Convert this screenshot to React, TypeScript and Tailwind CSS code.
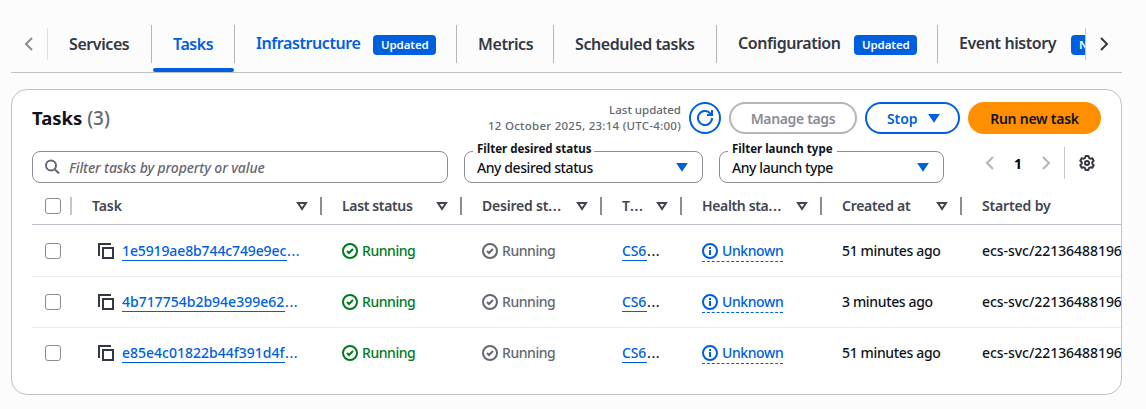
import React from "react";

type IconProps = { className?: string };

const Chevron = ({ dir, className = "" }: IconProps & { dir: "left" | "right" }) => (
  <svg viewBox="0 0 16 16" className={`size-4 shrink-0 ${className}`} fill="none" stroke="currentColor" strokeWidth="2">
    <path d={dir === "left" ? "M11 2 5 8l6 6" : "M5 2l6 6-6 6"} />
  </svg>
);

const Caret = ({ className = "" }: IconProps) => (
  <svg viewBox="0 0 16 16" className={`size-4 shrink-0 ${className}`} fill="currentColor" stroke="currentColor" strokeWidth="2">
    <path d="M4 5h8l-4 6z" />
  </svg>
);

const SortCaret = () => (
  <svg viewBox="0 0 16 16" className="size-4 shrink-0" fill="none" stroke="currentColor" strokeWidth="2">
    <path d="M4 5h8l-4 6z" />
  </svg>
);

const Refresh = () => (
  <svg viewBox="0 0 16 16" className="size-4" fill="none" stroke="currentColor" strokeWidth="2">
    <path d="M15 8a7 7 0 1 1-1.8-4.7L15 5" />
    <path d="M10 5h5V0" />
  </svg>
);

const Search = () => (
  <svg viewBox="0 0 16 16" className="size-4 shrink-0 text-[#656871]" fill="none" stroke="currentColor" strokeWidth="2">
    <circle cx="7" cy="6.5" r="5" />
    <path d="m10.5 10 4.500 4.500" />
  </svg>
);

const Gear = () => (
  <svg viewBox="0 0 16 16" className="size-4 shrink-0 text-[#333843]" fill="none" stroke="currentColor" strokeWidth="2" strokeLinejoin="round">
    <path d="M6.600 1h2.800l.6 2 1.300.75 2-.5 1.400 2.500L13.300 7.200v1.600l1.400 1.450-1.400 2.500-2-.5L10 13l-.6 2H6.600L6 13l-1.300-.75-2 .5-1.400-2.500L2.700 8.800V7.200L1.300 5.750l1.400-2.500 2 .5L6 3z" />
    <circle cx="8" cy="8" r="2" />
  </svg>
);

const Copy = () => (
  <svg viewBox="0 0 16 16" className="size-4 shrink-0 text-[#333843]" fill="none" stroke="currentColor" strokeWidth="2">
    <path d="M5 5h10v10H5z" />
    <path d="M1 13V1h12" />
  </svg>
);

const Check = () => (
  <svg viewBox="0 0 16 16" className="size-4 shrink-0" fill="none" stroke="currentColor" strokeWidth="2">
    <circle cx="8" cy="8" r="7" />
    <path d="m5 8 2 2 4-4" />
  </svg>
);

const Info = () => (
  <svg viewBox="0 0 16 16" className="size-4 shrink-0" fill="none" stroke="currentColor" strokeWidth="2">
    <circle cx="8" cy="8" r="7" />
    <path d="M8 7v5M8 4v2" />
  </svg>
);

const Badge = ({ children, className }: { children: string; className: string }) => (
  <span className={`h-5 w-[63px] shrink-0 rounded bg-[#005fde] pl-2 text-[11.5px] font-semibold leading-[20px] tracking-[-0.1px] text-white ${className}`}>
    {children}
  </span>
);

const tabs = [
  { label: "Services", width: "w-[104px]", box: "w-auto", color: "text-[#333843]", badge: "" },
  { label: "Tasks", width: "w-[83px]", box: "w-auto", color: "text-[#005fde]", badge: "" },
  { label: "Infrastructure", width: "w-[222px]", box: "w-[117px] -mt-0.5", color: "text-[#005fde]", badge: "Updated" },
  { label: "Metrics", width: "w-[97px]", box: "w-auto", color: "text-[#333843]", badge: "" },
  { label: "Scheduled tasks", width: "w-[163px]", box: "w-auto", color: "text-[#333843]", badge: "" },
  { label: "Configuration", width: "w-[221px]", box: "w-[116px] -mt-0.5", color: "text-[#333843]", badge: "Updated" },
  { label: "Event history", width: "w-[240px]", box: "w-[112px] -mt-0.5", color: "text-[#333843]", badge: "New" },
];

const Tabs = () => (
  <nav className="ml-[11px] mt-4 flex h-[57px] w-[1111px] border-b border-[#c0c0c8]">
    <div className="mt-3 flex h-8 w-[37px] shrink-0 items-center justify-center border-r border-[#dedee3] text-[#8c8c94]">
      <Chevron dir="left" />
    </div>
    <div className="flex w-[1037px] shrink-0 overflow-hidden">
      {tabs.map((t) => (
        <div key={t.label} className={`flex shrink-0 flex-col justify-between pt-[9px] ${t.width}`}>
          <div className="flex h-[38px] items-center border-r border-[#b4b4bb] pl-[21px]">
            <span className={`shrink-0 whitespace-nowrap text-[16px] font-[650] tracking-[-0.42px] ${t.color} ${t.box}`}>{t.label}</span>
            {t.badge && <Badge className="mt-0.5">{t.badge}</Badge>}
          </div>
          {t.label === "Tasks" && <div className="ml-px mr-px h-1 rounded-sm bg-[#005fde]" />}
        </div>
      ))}
    </div>
    <div className="mt-3 flex h-8 w-[37px] shrink-0 items-center justify-center border-l border-[#c6c6cd] text-[#333843]">
      <Chevron dir="right" />
    </div>
  </nav>
);

const Toolbar = () => (
  <div className="flex h-8 items-center">
    <h2 className="grow text-[18.5px] font-bold leading-6 text-[#0f141a]">
      Tasks <span className="text-[19px] font-medium text-[#656871]">(3)</span>
    </h2>
    <div className="mr-2 text-right text-[11.5px] font-medium leading-4 text-[#656871]">
      <div>Last updated</div>
      <div className="tracking-[0.26px]">12 October 2025, 23:14 (UTC-4:00)</div>
    </div>
    <button className="mr-2 flex size-8 shrink-0 items-center justify-center rounded-full border-2 border-[#005fde] text-[#005fde]">
      <Refresh />
    </button>
    <button className="mr-2 h-8 w-[128px] shrink-0 rounded-full border-2 border-[#b4b4bb] text-[14px] font-semibold tracking-[-0.35px] text-[#8c8c94]">Manage tags</button>
    <button className="mr-2 flex h-8 w-[95px] shrink-0 items-center rounded-full border-2 border-[#005fde] pl-5 text-[14px] font-[650] text-[#005fde]">
      <span className="w-[39px] text-left tracking-[-0.1px]">Stop</span>
      <Caret />
    </button>
    <button className="h-8 w-[133px] shrink-0 rounded-full bg-[#ff8f00] text-[14px] font-[650] tracking-[-0.25px] text-[#0f141a]">Run new task</button>
  </div>
);

const Select = ({ label, value, width, labelWidth }: { label: string; value: string; width: string; labelWidth: string }) => (
  <div className={`relative mr-4 flex h-8 shrink-0 items-center justify-between rounded-lg border border-[#8c8c94] pl-3 pr-3 text-[14px] font-medium text-[#0f141a] ${width}`}>
    <span className={`absolute -top-[11px] left-2 whitespace-nowrap bg-white pl-1 text-[11.5px] font-bold leading-[16px] ${labelWidth}`}>{label}</span>
    <span className="tracking-[-0.42px]">{value}</span>
    <Caret className="text-[#005fde]" />
  </div>
);

const Filters = () => (
  <div className="mt-[17px] flex h-8">
    <div className="mr-4 flex h-8 w-[416px] shrink-0 items-center rounded-lg border border-[#8c8c94] pl-[11px] text-[14px] font-medium italic text-[#656871]">
      <Search />
      <span className="ml-[9px] tracking-[-0.13px]">Filter tasks by property or value</span>
    </div>
    <Select label="Filter desired status" value="Any desired status" width="w-[239px]" labelWidth="w-[121px]" />
    <Select label="Filter launch type" value="Any launch type" width="w-[225px]" labelWidth="w-[109px]" />
    <div className="-mt-1 ml-[22px] flex h-8 items-center">
      <Chevron dir="left" className="text-[#b4b4bb]" />
      <span className="w-10 text-center text-[14px] font-bold">1</span>
      <Chevron dir="right" className="text-[#b4b4bb]" />
      <div className="ml-[10px] mr-[14px] h-8 w-px bg-[#c6c6cd]" />
      <Gear />
    </div>
  </div>
);

const Checkbox = () => <span className="ml-[13px] block size-4 rounded-[3px] border border-[#8c8c94] bg-white" />;

const Dots = ({ className = "" }: IconProps) => <span className={`tracking-[0.6px] ${className}`}>...</span>;

const columns = [
  { label: "Task", cut: false, sort: true, tracking: "tracking-[-0.1px]" },
  { label: "Last status", cut: false, sort: true, tracking: "tracking-[-0.35px]" },
  { label: "Desired st", cut: true, sort: true, tracking: "tracking-[-0.2px]" },
  { label: "T", cut: true, sort: true, tracking: "tracking-normal" },
  { label: "Health sta", cut: true, sort: true, tracking: "tracking-[-0.35px]" },
  { label: "Created at", cut: false, sort: true, tracking: "tracking-[-0.3px]" },
  { label: "Started by", cut: false, sort: false, tracking: "tracking-[-0.15px]" },
];

const grid = "grid grid-cols-[40px_250px_140px_140px_80px_140px_140px_160px] w-[1090px] items-center";

const rows = [
  { id: "1e5919ae8b744c749e9ec", w: "w-[165px] tracking-[-0.12px]", created: "51 minutes ago" },
  { id: "4b717754b2b94e399e62", w: "w-[163px] tracking-normal", created: "3 minutes ago" },
  { id: "e85e4c01822b44f391d4f", w: "w-[163px] tracking-normal", created: "51 minutes ago" },
];

const Table = () => (
  <div className="mt-1 text-[14px] font-medium leading-5 text-[#0f141a]">
    <div className={`${grid} h-[38px] border-b border-[#c0c0c8] font-semibold text-[#424650]`}>
      <div className="flex items-center">
        <Checkbox />
        <div className="ml-auto h-[18px] w-[2px] bg-[#c6c6cd]" />
      </div>
      {columns.map((c) => (
        <div key={c.label} className="flex items-center whitespace-nowrap pl-5">
          <span className={c.tracking}>
            {c.label}
            {c.cut && <Dots />}
          </span>
          {c.sort && (
            <>
              <span className="ml-auto mr-[10px] flex">
                <SortCaret />
              </span>
              <div className="h-[18px] w-[2px] bg-[#8c8c94]" />
            </>
          )}
        </div>
      ))}
    </div>
    {rows.map((r, i) => (
      <div key={r.id} className={`${grid} ${i === 0 ? "h-[52px]" : i === 1 ? "h-[51px]" : "h-[50px]"} ${i < 2 ? "border-b border-[#ebebf0]" : ""}`}>
        <Checkbox />
        <div className="flex items-center pl-[26px]">
          <Copy />
          <span className={`ml-2 h-5 whitespace-nowrap border-b border-[#005fde] text-[#005fde] ${r.w}`}>{r.id}</span>
          <Dots className="text-[#005fde]" />
        </div>
        <div className="flex items-center gap-1 pl-5 tracking-[-0.45px] text-[#007a1c]">
          <Check />
          Running
        </div>
        <div className="flex items-center gap-1 pl-5 tracking-[-0.45px] text-[#656871]">
          <Check />
          Running
        </div>
        <div className="flex items-center pl-5">
          <span className="h-5 w-[25px] whitespace-nowrap border-b border-[#005fde] tracking-[-0.2px] text-[#005fde]">CS6</span>
          <Dots />
        </div>
        <div className="flex pl-5">
          <div className="mt-px flex h-[21px] w-[81px] items-center gap-1 border-b border-dashed border-[#005fde] tracking-[-0.4px] text-[#005fde]">
            <Info />
            Unknown
          </div>
        </div>
        <div className="whitespace-nowrap pl-5 tracking-[-0.35px]">{r.created}</div>
        <div className="whitespace-nowrap pl-5 tracking-[-0.05px]">ecs-svc/2213648819652</div>
      </div>
    ))}
  </div>
);

export default function App() {
  return (
    <div className="flex h-[409px] w-[1146px] flex-col overflow-hidden bg-[#fcfcfd] font-['Noto_Sans',sans-serif]">
      <Tabs />
      <main className="ml-[11px] mt-4 h-[306px] w-[1111px] overflow-hidden rounded-2xl border border-[#c0c0c8] bg-white pl-5 pr-5 pt-3">
        <Toolbar />
        <Filters />
        <Table />
      </main>
    </div>
  );
}
